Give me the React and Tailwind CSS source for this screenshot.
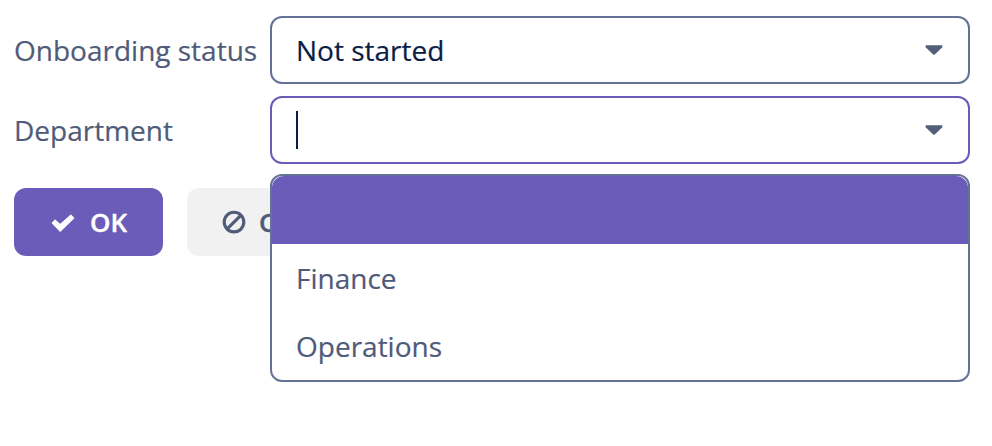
import React from "react";

function Caret() {
  return (
    <svg width="18" height="10" viewBox="0 0 18 10" className="mr-[25px] shrink-0" fill="#535e7c">
      <path d="M1.4.3h15.2c.6 0 .8.3.8.8v.8c0 .3-.1.5-.3.7L9.8 9.4c-.5.4-1.1.4-1.6 0L.9 2.6c-.2-.2-.3-.4-.3-.7v-.8c0-.5.2-.8.8-.8z" />
    </svg>
  );
}

function CheckIcon() {
  return (
    <svg width="24" height="24" viewBox="0 0 24 24" className="mr-[15px] shrink-0" fill="currentColor" stroke="currentColor" strokeWidth="1.2" strokeLinejoin="round">
      <path d="M1.4 13 4.1 10.2 9.1 14.8 19.9 5.1 22.7 8.1 9.1 21.2z" />
    </svg>
  );
}

function BanIcon() {
  return (
    <svg width="24" height="24" viewBox="0 0 24 24" className="mr-[13px] shrink-0" fill="none" stroke="currentColor" strokeWidth="3.1">
      <circle cx="12" cy="12.1" r="9.8" />
      <path d="M5.2 18.9 18.8 5.3" />
    </svg>
  );
}

function Field({ label, focused, children }) {
  return (
    <div className="flex h-[68px] items-center">
      <div className="w-[256px] whitespace-nowrap">{label}</div>
      <div
        className={
          "flex h-[68px] w-[700px] items-center justify-between rounded-[12px] border-2 bg-white pl-[24px] " +
          (focused ? "border-[#6b5bb8]" : "border-[#667295]")
        }
      >
        {children}
        <Caret />
      </div>
    </div>
  );
}

export default function App() {
  return (
    <div className="relative h-[446px] w-[992px] overflow-hidden bg-white pl-[14px] pt-[16px] font-['Open_Sans',sans-serif] text-[28px] leading-[38px] text-[#505b79] [-webkit-text-stroke:0.2px_currentColor]">
      <div className="flex flex-col gap-3">
        <Field label="Onboarding status">
          <span className="text-[#0b1c46]">Not started</span>
        </Field>
        <Field label="Department" focused>
          <span className="h-[38px] w-[2px] bg-[#0b1c46]" />
        </Field>
      </div>
      <div className="mt-6 flex gap-6 text-[26px] font-semibold [-webkit-text-stroke:0.4px_currentColor]">
        <button className="flex h-[68px] w-[149px] items-center rounded-[12px] bg-[#6c5cb9] pl-[37px] text-white">
          <CheckIcon />
          OK
        </button>
        <button className="flex h-[68px] w-[198px] items-center rounded-[12px] bg-[#f1f1f1] pl-[35px]">
          <BanIcon />
          Cancel
        </button>
      </div>
      <ul className="absolute left-[270px] top-[174px] w-[700px] rounded-[12px] border-2 border-[#667295] bg-white">
        <li className="h-[68px] rounded-t-[12px] bg-[#6c5cb9]" />
        <li className="flex h-[68px] items-center pl-[24px]">Finance</li>
        <li className="flex h-[68px] items-center pl-[24px]">Operations</li>
      </ul>
    </div>
  );
}
